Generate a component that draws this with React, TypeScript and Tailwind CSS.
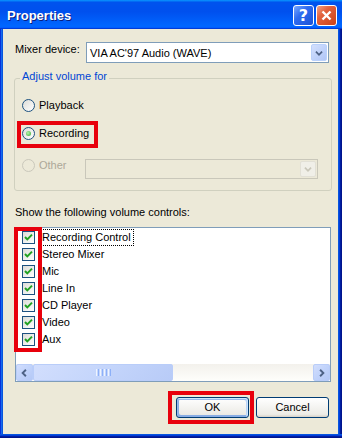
import React from "react";

function Chevron({ dir, color = "#4D6185" }: { dir: "down" | "left" | "right"; color?: string }) {
  const pts =
    dir === "down" ? "4.5,6.5 8,10 11.5,6.5" : dir === "left" ? "9.5,4.5 6,8 9.5,11.5" : "6.5,4.5 10,8 6.5,11.5";
  return (
    <svg width="16" height="16" viewBox="0 0 16 16">
      <polyline points={pts} fill="none" stroke={color} strokeWidth="2" />
    </svg>
  );
}

function Radio({ checked, disabled }: { checked?: boolean; disabled?: boolean }) {
  return (
    <span
      className={
        disabled
          ? "w-[13px] h-[13px] rounded-full border border-[#CAC8BB] bg-[#ECE9D8] flex items-center justify-center shrink-0"
          : "w-[13px] h-[13px] rounded-full border border-[#1C5180] bg-[linear-gradient(135deg,#DCDCD7,#FFFFFF)] flex items-center justify-center shrink-0"
      }
    >
      {checked && (
        <span className="w-[5px] h-[5px] rounded-full bg-[radial-gradient(circle_at_40%_40%,#B6F5AE,#2FA82B)]" />
      )}
    </span>
  );
}

function Check() {
  return (
    <span className="w-[13px] h-[13px] border border-[#1C5180] bg-[linear-gradient(135deg,#DCDCD7,#FFFFFF)] flex items-center justify-center shrink-0">
      <svg width="11" height="11" viewBox="0 0 11 11">
        <path d="M2 5 L4.3 7.4 L9 2.6" fill="none" stroke="#21A121" strokeWidth="2" />
      </svg>
    </span>
  );
}

function ScrollBtn({ dir }: { dir: "left" | "right" }) {
  return (
    <span className="w-[17px] h-[17px] rounded-[2px] border border-[#B9CDF9] bg-[linear-gradient(135deg,#D2DEFD,#C1D3FB_50%,#B4C8F6)] flex items-center justify-center shrink-0">
      <Chevron dir={dir} />
    </span>
  );
}

const items = ["Recording Control", "Stereo Mixer", "Mic", "Line In", "CD Player", "Video", "Aux"];

export default function App() {
  return (
    <div className="w-[342px] h-[438px] flex flex-col overflow-hidden font-['Liberation_Sans',Arial,sans-serif] text-[11px] leading-[13px] text-black bg-[#0831D9]">
      {/* Title bar */}
      <div className="h-[29px] shrink-0 flex items-center pl-[7px] pr-[5px] bg-[linear-gradient(180deg,#0997ff,#0053ee_8%,#0050ee_40%,#0066ff_88%,#0066ff_93%,#005bff_95%,#003dd7_96%,#003dd7)]">
        <span className="flex-1 pt-[2px] text-white font-bold text-[13px] leading-[15px] [text-shadow:1px_1px_0_#0A1E80]">
          Properties
        </span>
        <span className="w-[21px] h-[21px] mt-[2px] rounded-[3px] border border-white bg-[linear-gradient(135deg,#7AA8FF_0%,#2E6BF0_40%,#1C52D6_100%)] flex items-center justify-center text-white font-bold text-[16px] leading-[16px] font-['DejaVu_Sans',sans-serif]">
          ?
        </span>
        <span className="w-[21px] h-[21px] mt-[2px] ml-[2px] rounded-[3px] border border-white bg-[linear-gradient(135deg,#F2A283_0%,#E2623E_35%,#CC4116_100%)] flex items-center justify-center">
          <svg width="13" height="13" viewBox="0 0 13 13">
            <path d="M2.5 2.5 L10.5 10.5 M10.5 2.5 L2.5 10.5" stroke="white" strokeWidth="2.4" />
          </svg>
        </span>
      </div>

      <div className="flex-1 flex">
        <div className="w-[3px] bg-[linear-gradient(90deg,#0831d9_0_1px,#166aee_1px_2px,#0855dd_2px_3px)]" />
        <div className="flex-1 bg-[#ECE9D8] relative flex flex-col">
          {/* Mixer device */}
          <div className="mt-[13px] ml-[12px] flex">
            <span className="w-[71px] pt-[1px]">Mixer device:</span>
            <div className="w-[243px] h-[21px] border border-[#7F9DB9] bg-white flex items-center p-[1px]">
              <span className="flex-1 pl-[2px] pt-[1px]">VIA AC'97 Audio (WAVE)</span>
              <span className="w-[16px] h-[17px] rounded-[2px] border border-[#BAD1FC] bg-[linear-gradient(135deg,#D4E0FD,#C1D3FB_50%,#B1C6F6)] flex items-center justify-center">
                <Chevron dir="down" />
              </span>
            </div>
          </div>

          {/* Group box */}
          <div className="mt-[15px] ml-[11px] w-[318px] h-[113px] border border-[#D0D0BF] rounded-[3px] relative">
            <span className="absolute left-[5px] top-[-9px] px-[2px] bg-[#ECE9D8] text-[#0046D5]">Adjust volume for</span>
            <div className="pl-[7px] pt-[20px] flex flex-col">
              <div className="flex items-center gap-[4px] h-[13px]">
                <Radio />
                <span>Playback</span>
              </div>
              <div className="flex items-center gap-[4px] h-[13px] mt-[15px]">
                <Radio checked />
                <span>Recording</span>
              </div>
              <div className="flex items-start mt-[19px]">
                <div className="w-[63px] flex items-center gap-[4px] h-[13px] text-[#ACA899]">
                  <Radio disabled />
                  <span>Other</span>
                </div>
                <div className="w-[233px] h-[20px] border border-[#C9C7BA] bg-[#ECE9D8] flex justify-end p-[1px]">
                  <span className="w-[16px] h-[16px] rounded-[2px] border border-[#E2E0D6] bg-[#F0EFE8] flex items-center justify-center">
                    <Chevron dir="down" color="#C9C7BA" />
                  </span>
                </div>
              </div>
            </div>
          </div>

          {/* Volume controls */}
          <div className="mt-[15px] ml-[12px]">Show the following volume controls:</div>
          <div className="mt-[8px] ml-[12px] w-[316px] h-[155px] border border-[#7F9DB9] bg-white flex flex-col">
            <div className="flex-1 pt-[1px] flex flex-col">
              {items.map((t, i) => (
                <div key={t} className="h-[17px] flex items-center pl-[6px]">
                  <Check />
                  <span
                    className={
                      i === 0
                        ? "ml-[6px] h-[17px] flex items-center border border-dotted border-black pr-[2px]"
                        : "ml-[6px] h-[17px] flex items-center border border-transparent pr-[2px]"
                    }
                  >
                    {t}
                  </span>
                </div>
              ))}
            </div>
            <div className="h-[17px] flex bg-[linear-gradient(180deg,#F3F1EC,#FEFEFB)]">
              <ScrollBtn dir="left" />
              <span className="w-[140px] h-[17px] rounded-[2px] border border-[#B9CDF9] bg-[linear-gradient(135deg,#D2DEFD,#C4D5FB_50%,#B8CBF7)] flex items-center justify-center gap-[1px]">
                <span className="w-[1px] h-[7px] bg-[#EEF4FE]" />
                <span className="w-[1px] h-[7px] bg-[#8CB0F8]" />
                <span className="w-[1px] h-[7px] bg-[#EEF4FE]" />
                <span className="w-[1px] h-[7px] bg-[#8CB0F8]" />
                <span className="w-[1px] h-[7px] bg-[#EEF4FE]" />
                <span className="w-[1px] h-[7px] bg-[#8CB0F8]" />
                <span className="w-[1px] h-[7px] bg-[#EEF4FE]" />
                <span className="w-[1px] h-[7px] bg-[#8CB0F8]" />
              </span>
              <span className="flex-1" />
              <ScrollBtn dir="right" />
            </div>
          </div>

          {/* Buttons */}
          <div className="mt-[15px] ml-[173px] flex gap-[7px]">
            <span className="w-[73px] h-[21px] rounded-[3px] border border-[#003C74] bg-[linear-gradient(180deg,#FFFFFF,#ECEBE6_86%,#D6D0C5)] shadow-[inset_-1px_1px_#CEE7FF,inset_1px_2px_#98B8EA,inset_-2px_2px_#BCD4F6,inset_1px_-1px_#89ADE4,inset_2px_-2px_#89ADE4] flex items-center justify-center">
              OK
            </span>
            <span className="w-[73px] h-[21px] rounded-[3px] border border-[#003C74] bg-[linear-gradient(180deg,#FFFFFF,#ECEBE6_86%,#D6D0C5)] flex items-center justify-center">
              Cancel
            </span>
          </div>

          {/* Red annotation boxes */}
          <div className="absolute left-[14px] top-[92px] w-[81px] h-[27px] border-[4px] border-[#E8000C]" />
          <div className="absolute left-[11px] top-[198px] w-[28px] h-[125px] border-[4px] border-[#E8000C]" />
          <div className="absolute left-[165px] top-[362px] w-[86px] h-[33px] border-[4px] border-[#E8000C]" />
        </div>
        <div className="w-[4px] bg-[linear-gradient(90deg,#0855dd_0_1px,#003bda_1px_2px,#001ea0_2px_3px,#00138c_3px_4px)]" />
      </div>
      <div className="h-[4px] shrink-0 bg-[linear-gradient(180deg,#0855dd_0_1px,#003bda_1px_2px,#001ea0_2px_3px,#00138c_3px_4px)]" />
    </div>
  );
}
